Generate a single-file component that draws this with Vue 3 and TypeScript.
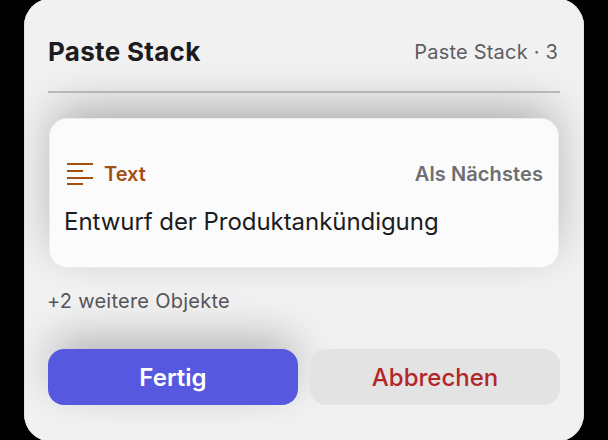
<script setup lang="ts">
const title = 'Paste Stack'
const count = 3
const more = 2
</script>

<template>
  <div class="stage">
    <section class="panel">
      <header class="head">
        <h1 class="title">{{ title }}</h1>
        <span class="meta">{{ title }} · {{ count }}</span>
      </header>
      <div class="rule"></div>
      <article class="card">
        <div class="card-top">
          <div class="kind">
            <svg class="icon" width="26" height="22" viewBox="0 0 26 22" fill="none" stroke="currentColor" stroke-width="2">
              <path d="M0 1H26M0 8H16M0 15H26M0 21H16" />
            </svg>
            <span>Text</span>
          </div>
          <span class="next">Als Nächstes</span>
        </div>
        <p class="body">Entwurf der Produktankündigung</p>
      </article>
      <p class="more">+{{ more }} weitere Objekte</p>
      <div class="actions">
        <button class="btn primary" type="button">Fertig</button>
        <button class="btn cancel" type="button">Abbrechen</button>
      </div>
    </section>
  </div>
</template>

<style scoped>
.stage {
  width: 608px;
  height: 440px;
  overflow: hidden;
  background: #000;
  padding: 0 24px;
  box-sizing: border-box;
  font-family: Inter, "Liberation Sans", sans-serif;
}
.panel {
  box-sizing: border-box;
  width: 560px;
  height: 444px;
  margin-top: -2px;
  padding: 0 24px;
  border-radius: 28px;
  background: #f1f1f2;
  box-shadow: inset 0 0 0 1px #e4e4e5;
  display: flex;
  flex-direction: column;
}
.head {
  height: 93px;
  display: flex;
  align-items: center;
  justify-content: space-between;
  padding-top: 13px;
  box-sizing: border-box;
}
.title {
  margin: 0;
  font-size: 26px;
  font-weight: 700;
  color: #1c1c1e;
  letter-spacing: 0.3px;
}
.meta {
  font-size: 20px;
  color: #5d5d62;
  letter-spacing: 0.2px;
  margin-right: 2px;
  padding-top: 2px;
}
.rule {
  height: 2px;
  background: #c0c0c1;
}
.card {
  margin: 25px 1px 0;
  height: 150px;
  box-sizing: border-box;
  padding: 43px 14px 0 14px;
  background: #fbfbfb;
  border-radius: 18px;
  border: 1px solid #ededee;
  box-shadow: 0 -14px 46px -6px rgba(0, 0, 0, 0.3);
}
.card-top {
  display: flex;
  align-items: center;
  justify-content: space-between;
  height: 24px;
}
.kind {
  display: flex;
  align-items: center;
  gap: 11px;
  font-size: 20px;
  font-weight: 600;
  color: #a34f14;
  margin-left: 3px;
}
.next {
  font-size: 20px;
  font-weight: 600;
  color: #6e6e73;
  letter-spacing: 0.1px;
  margin-right: 1px;
}
.body {
  margin: 21px 0 0;
  font-size: 24px;
  line-height: 30px;
  color: #1c1c1e;
  letter-spacing: -0.05px;
}
.more {
  margin: 21px 0 0 -1px;
  font-size: 20px;
  line-height: 24px;
  color: #56565a;
  letter-spacing: 0.25px;
}
.actions {
  margin-top: 36px;
  display: flex;
  gap: 12px;
}
.btn {
  flex: 1;
  height: 56px;
  border: 0;
  border-radius: 16px;
  font-family: inherit;
  font-size: 24px;
  font-weight: 600;
  padding: 0;
}
.primary {
  background: #5658e0;
  color: #fff;
  box-shadow: 0 -14px 44px -6px rgba(0, 0, 0, 0.3);
}
.cancel {
  background: #e3e3e4;
  color: #b3262b;
  font-weight: 500;
}
</style>

<style>
html, body { margin: 0; background: #000; }
</style>
